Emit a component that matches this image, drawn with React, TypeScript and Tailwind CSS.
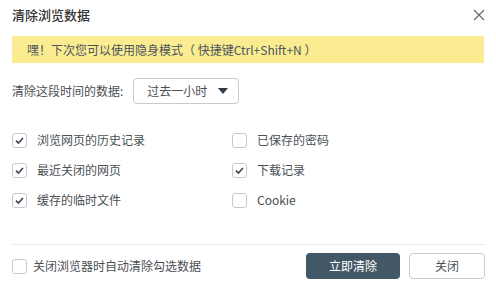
import React from 'react';

const font = { fontFamily: '"Noto Sans CJK SC", "Noto Sans", sans-serif' };

function Box({ checked }: { checked: boolean }) {
  return (
    <span className="flex h-[15px] w-[15px] shrink-0 items-center justify-center rounded-[3px] border border-[#c5c9cf] bg-white">
      {checked && (
        <svg width="11" height="11" viewBox="0 0 11 11" fill="none">
          <path d="M2 5.6 L4.4 8 L9 3" stroke="#3f4a55" strokeWidth="1.7" />
        </svg>
      )}
    </span>
  );
}

function Item({ label, checked }: { label: string; checked: boolean }) {
  return (
    <label className="flex h-[30px] items-center gap-[10px] text-[12px] text-[#4a4f55]">
      <Box checked={checked} />
      <span>{label}</span>
    </label>
  );
}

const left = [
  { label: '浏览网页的历史记录', checked: true },
  { label: '最近关闭的网页', checked: true },
  { label: '缓存的临时文件', checked: true },
];

const right = [
  { label: '已保存的密码', checked: false },
  { label: '下载记录', checked: true },
  { label: 'Cookie', checked: false },
];

export default function App() {
  return (
    <div className="h-[287px] w-[496px] bg-white px-[12px] text-[#4a4f55]" style={font}>
      {/* header */}
      <div className="flex h-[29px] items-center justify-between">
        <h1 className="text-[13px] font-medium text-[#333]">清除浏览数据</h1>
        <svg width="12" height="12" viewBox="0 0 12 12" className="mr-[-1px]">
          <path d="M1 1 L11 11 M11 1 L1 11" stroke="#5b6670" strokeWidth="1.1" />
        </svg>
      </div>

      <div className="mt-[7px] flex h-[27px] items-center bg-[#fbec91] pl-[15px] text-[12px] text-[#4a545e]">
        嘿！下次您可以使用隐身模式（ 快捷键Ctrl+Shift+N ）
      </div>

      <div className="mt-[15px] flex items-center gap-[10px] text-[12px]">
        <span>清除这段时间的数据:</span>
        <div className="flex h-[26px] w-[106px] items-center justify-between rounded-[4px] border border-[#c8ccd2] pl-[13px] pr-[10px]">
          <span>过去一小时</span>
          <svg width="10" height="6" viewBox="0 0 10 6">
            <path d="M0 0 H10 L5 6 Z" fill="#2f3a44" />
          </svg>
        </div>
      </div>

      <div className="mt-[21px] grid grid-cols-[220px_1fr]">
        <div className="flex flex-col">
          {left.map((i) => (
            <Item key={i.label} {...i} />
          ))}
        </div>
        <div className="flex flex-col">
          {right.map((i) => (
            <Item key={i.label} {...i} />
          ))}
        </div>
      </div>

      <div className="mt-[29px] h-px w-[473px] bg-[#ececec]" />

      <div className="mt-[8px] flex w-[473px] items-center justify-between">
        <label className="flex items-center gap-[6px] text-[12px]">
          <Box checked={false} />
          <span>关闭浏览器时自动清除勾选数据</span>
        </label>
        <div className="flex gap-[9px]">
          <button className="h-[26px] w-[94px] rounded-[4px] bg-[#435867] text-[12px] text-white">
            立即清除
          </button>
          <button className="h-[26px] w-[76px] rounded-[4px] border border-[#c8ccd2] bg-white text-[12px] text-[#4a4f55]">
            关闭
          </button>
        </div>
      </div>
    </div>
  );
}
